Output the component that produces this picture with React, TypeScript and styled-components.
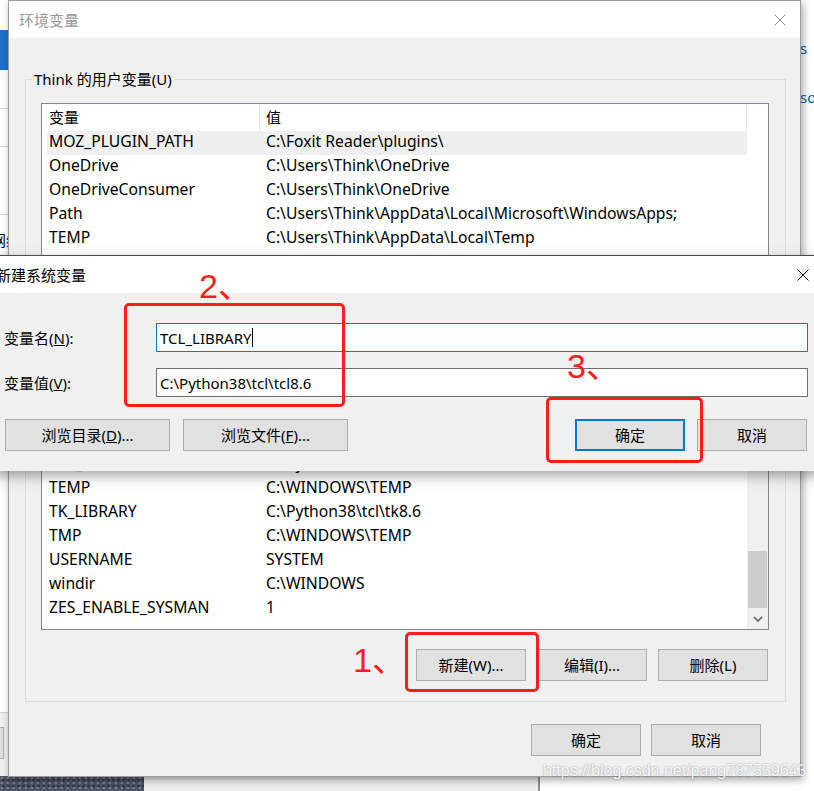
import styled, { createGlobalStyle } from "styled-components";

const GlobalStyle = createGlobalStyle`
  html, body { margin: 0; padding: 0; background: #fff; }
  body {
    font-family: "Noto Sans", "Noto Sans CJK SC", sans-serif;
    font-size: 15px;
    color: #000;
  }
  * { box-sizing: border-box; }
`;

const Desktop = styled.div`
  position: relative;
  width: 814px;
  height: 791px;
  overflow: hidden;
  background: #fff;
`;

/* ---- windows behind the dialogs ---- */

const SideWindow = styled.div`
  position: absolute;
  left: 0;
  top: 0;
  width: 40px;
  height: 776px;
  background: #fff;
  display: flex;
  flex-direction: column;
`;

const SideBand = styled.div<{ $h: number; $line?: boolean }>`
  flex: none;
  height: ${(p) => p.$h}px;
  border-bottom: ${(p) => (p.$line ? "1px solid #d4d4d4" : "none")};
`;

const AppTile = styled.div`
  flex: none;
  width: 36px;
  height: 40px;
  background: #1f6fc6;
  border-radius: 0 10px 10px 0;
`;

const SideText = styled.div`
  flex: none;
  margin: 15px 0 0 -9px;
  line-height: 20px;
  white-space: nowrap;
`;

const SideFill = styled.div`
  flex: 1;
  border-bottom: 1px solid #d4d4d4;
`;

const SideFoot = styled.div`
  flex: none;
  height: 63px;
  background: #f0f0f0;
  padding-top: 14px;
`;

const SideButton = styled.div`
  width: 40px;
  height: 32px;
  margin-left: -36px;
  background: #e1e1e1;
  border: 1px solid #adadad;
`;

const RightLinks = styled.div`
  position: absolute;
  left: 800px;
  top: 38px;
  display: flex;
  flex-direction: column;
  color: #0063b1;
  line-height: 20px;
  white-space: nowrap;
`;

const LinkLine = styled.span<{ $gap?: number }>`
  margin-top: ${(p) => p.$gap ?? 0}px;
`;

const Taskbar = styled.div`
  position: absolute;
  left: 0;
  top: 776px;
  width: 814px;
  height: 15px;
  display: flex;
`;

const Photo = styled.div`
  flex: none;
  width: 144px;
  background-color: #4c5365;
  background-image: radial-gradient(circle at 30% 40%, #7a8094 0.8px, transparent 1.6px),
    radial-gradient(circle at 70% 70%, #30343f 0.8px, transparent 1.8px);
  background-size: 6px 5px, 5px 6px;
`;

const GreyPane = styled.div`
  flex: none;
  width: 396px;
  background: linear-gradient(#dcdcdc, #efefef 40%);
  border-right: 2px solid #8e8e8e;
`;

/* ---- shared dialog parts ---- */

const TitleBar = styled.div<{ $active?: boolean; $inset: number }>`
  flex: none;
  height: 37px;
  background: #fff;
  display: flex;
  align-items: center;
  padding-left: ${(p) => p.$inset}px;
  color: ${(p) => (p.$active ? "#000" : "#999")};
  white-space: nowrap;
`;

const TitleText = styled.span`
  flex: 1;
  line-height: 20px;
`;

const CloseButton = styled.div<{ $width: number }>`
  flex: none;
  width: ${(p) => p.$width}px;
  height: 100%;
  display: flex;
  align-items: center;
  justify-content: center;
`;

const PushButton = styled.button<{ $width: number; $default?: boolean }>`
  flex: none;
  width: ${(p) => p.$width}px;
  height: 32px;
  padding: 0;
  background: #e1e1e1;
  border: ${(p) => (p.$default ? "2px solid #0078d7" : "1px solid #adadad")};
  font: inherit;
  color: #000;
  line-height: 20px;
  white-space: nowrap;
`;

const ButtonRow = styled.div<{ $top: number; $right: number; $gap: number }>`
  flex: none;
  display: flex;
  justify-content: flex-end;
  gap: ${(p) => p.$gap}px;
  margin-top: ${(p) => p.$top}px;
  padding-right: ${(p) => p.$right}px;
`;

/* ---- 环境变量 ---- */

const EnvWindow = styled.div`
  position: absolute;
  left: 8px;
  top: 0;
  width: 793px;
  height: 777px;
  border: 1px solid #9c9c9c;
  background: #f0f0f0;
  box-shadow: 2px 3px 8px rgba(0, 0, 0, 0.35);
  display: flex;
  flex-direction: column;
`;

const EnvBody = styled.div`
  flex: 1;
  padding: 32px 14px 0 16px;
  display: flex;
  flex-direction: column;
`;

const Group = styled.fieldset<{ $top: number; $bottom: number }>`
  margin: ${(p) => p.$top}px 0 0;
  padding: 0 0 ${(p) => p.$bottom}px;
  border: 1px solid #dcdcdc;
  min-width: 0;
  display: flex;
  flex-direction: column;
`;

const Legend = styled.legend`
  margin-left: 6px;
  padding: 0 2px;
  line-height: 18px;
  white-space: nowrap;
`;

const ListView = styled.div<{ $height: number }>`
  flex: none;
  height: ${(p) => p.$height}px;
  margin: 15px 16px 0 15px;
  border: 1px solid #828790;
  background: #fff;
  display: flex;
  overflow: hidden;
`;

const ListColumns = styled.div`
  flex: 1;
  min-width: 0;
  padding-left: 5px;
  display: flex;
  flex-direction: column;
  overflow: hidden;
`;

const HeaderRow = styled.div`
  flex: none;
  height: 27px;
  display: grid;
  grid-template-columns: 213px 1fr;
  border-right: 1px solid #e5e5e5;
`;

const HeaderCell = styled.div<{ $first?: boolean }>`
  line-height: 27px;
  padding-left: ${(p) => (p.$first ? 2 : 6)}px;
  border-right: ${(p) => (p.$first ? "1px solid #e5e5e5" : "none")};
`;

const ItemRow = styled.div<{ $selected?: boolean }>`
  flex: none;
  height: 24px;
  display: grid;
  grid-template-columns: 213px 1fr;
  background: ${(p) => (p.$selected ? "#efefef" : "transparent")};
`;

const ItemCell = styled.div<{ $first?: boolean }>`
  font-size: 15.7px;
  line-height: 21px;
  padding-left: ${(p) => (p.$first ? 2 : 6)}px;
  white-space: nowrap;
  overflow: hidden;
`;

const ScrollColumn = styled.div<{ $shown?: boolean }>`
  flex: none;
  width: 21px;
  background: ${(p) => (p.$shown ? "#f0f0f0" : "#fff")};
  display: flex;
  flex-direction: column;
`;

const ScrollSpacer = styled.div`
  flex: 1;
`;

const ScrollThumb = styled.div`
  flex: none;
  height: 57px;
  margin: 0 1px;
  background: #cdcdcd;
`;

const ScrollArrow = styled.div`
  flex: none;
  height: 21px;
  display: flex;
  align-items: center;
  justify-content: center;
`;

/* ---- 新建系统变量 ---- */

const NewVarWindow = styled.div`
  position: absolute;
  left: -14px;
  top: 255px;
  width: 840px;
  height: 216px;
  border-top: 1px solid #4a4a4a;
  background: #f0f0f0;
  box-shadow: 0 5px 12px rgba(0, 0, 0, 0.35);
  display: flex;
  flex-direction: column;
`;

const NewVarBody = styled.div`
  flex: 1;
  padding: 30px 18px 20px 18px;
  display: flex;
  flex-direction: column;
`;

const FieldRow = styled.div<{ $top?: number }>`
  flex: none;
  display: grid;
  grid-template-columns: 152px 1fr;
  align-items: center;
  margin-top: ${(p) => p.$top ?? 0}px;
`;

const FieldLabel = styled.label`
  line-height: 20px;
  white-space: nowrap;
`;

const TextBox = styled.div<{ $focused?: boolean }>`
  height: 29px;
  padding: 0 3px;
  border: 1px solid ${(p) => (p.$focused ? "#0078d7" : "#6e6e6e")};
  background: #fff;
  display: flex;
  align-items: center;
  line-height: 20px;
  white-space: nowrap;
`;

const Caret = styled.span`
  width: 1px;
  height: 19px;
  margin-left: 1px;
  background: #000;
`;

const DialogButtons = styled.div`
  flex: none;
  display: flex;
  margin-top: 22px;
  padding: 0 1px;
  gap: 13px;
`;

const Spacer = styled.div`
  flex: 1;
`;

const ConfirmPair = styled.div`
  display: flex;
  gap: 12px;
`;

/* ---- marks drawn over the screenshot ---- */

const RedFrame = styled.div<{ $x: number; $y: number; $w: number; $h: number }>`
  position: absolute;
  left: ${(p) => p.$x}px;
  top: ${(p) => p.$y}px;
  width: ${(p) => p.$w}px;
  height: ${(p) => p.$h}px;
  border: 3px solid #ff1c1c;
  border-radius: 5px;
  pointer-events: none;
`;

const StepMark = styled.div<{ $x: number; $y: number }>`
  position: absolute;
  left: ${(p) => p.$x}px;
  top: ${(p) => p.$y}px;
  font-family: "Liberation Sans", "Noto Sans CJK SC", sans-serif;
  font-size: 34px;
  line-height: 34px;
  color: #ff1c1c;
  white-space: nowrap;
`;

const Watermark = styled.div`
  position: absolute;
  left: 543px;
  top: 762px;
  font-family: "Liberation Sans", sans-serif;
  font-size: 16px;
  line-height: 18px;
  color: rgba(255, 255, 255, 0.9);
  text-shadow: 0 0 2px rgba(0, 0, 0, 0.4);
  white-space: nowrap;
`;

function CloseIcon({ color }: { color: string }) {
  return (
    <svg width="12" height="12" viewBox="0 0 12 12">
      <path d="M0.5 0.5 L11.5 11.5 M11.5 0.5 L0.5 11.5" stroke={color} strokeWidth="1" fill="none" />
    </svg>
  );
}

function ChevronDown() {
  return (
    <svg width="10" height="6" viewBox="0 0 10 6">
      <polyline points="1,1 5,5 9,1" stroke="#606060" strokeWidth="1.6" fill="none" />
    </svg>
  );
}

type Row = [string, string];

const userRows: Row[] = [
  ["MOZ_PLUGIN_PATH", "C:\\Foxit Reader\\plugins\\"],
  ["OneDrive", "C:\\Users\\Think\\OneDrive"],
  ["OneDriveConsumer", "C:\\Users\\Think\\OneDrive"],
  ["Path", "C:\\Users\\Think\\AppData\\Local\\Microsoft\\WindowsApps;"],
  ["TEMP", "C:\\Users\\Think\\AppData\\Local\\Temp"],
  ["TMP", "C:\\Users\\Think\\AppData\\Local\\Temp"],
];

const systemRows: Row[] = [
  ["PROCESSOR_REVISION", "9e0a"],
  ["PSModulePath", "%ProgramFiles%\\WindowsPowerShell\\Modules;"],
  ["TCL_LIBRARY", "C:\\Python38\\tcl\\tcl8.6"],
  ["TEMP", "C:\\WINDOWS\\TEMP"],
  ["TK_LIBRARY", "C:\\Python38\\tcl\\tk8.6"],
  ["TMP", "C:\\WINDOWS\\TEMP"],
  ["USERNAME", "SYSTEM"],
  ["windir", "C:\\WINDOWS"],
  ["ZES_ENABLE_SYSMAN", "1"],
];

function VarList({ rows, height, scroll, selected }: { rows: Row[]; height: number; scroll?: boolean; selected?: number }) {
  return (
    <ListView $height={height}>
      <ListColumns>
        <HeaderRow>
          <HeaderCell $first>变量</HeaderCell>
          <HeaderCell>值</HeaderCell>
        </HeaderRow>
        {rows.map(([name, value], i) => (
          <ItemRow key={name + i} $selected={i === selected}>
            <ItemCell $first>{name}</ItemCell>
            <ItemCell>{value}</ItemCell>
          </ItemRow>
        ))}
      </ListColumns>
      <ScrollColumn $shown={scroll}>
        {scroll && (
          <>
            <ScrollSpacer />
            <ScrollThumb />
            <ScrollArrow>
              <ChevronDown />
            </ScrollArrow>
          </>
        )}
      </ScrollColumn>
    </ListView>
  );
}

export default function App() {
  return (
    <Desktop>
      <GlobalStyle />

      <SideWindow>
        <SideBand $h={30} />
        <AppTile />
        <SideBand $h={39} $line />
        <SideBand $h={38} $line />
        <SideBand $h={68} $line />
        <SideText>网络</SideText>
        <SideFill />
        <SideFoot>
          <SideButton />
        </SideFoot>
      </SideWindow>

      <RightLinks>
        <LinkLine>s</LinkLine>
        <LinkLine $gap={29}>soft</LinkLine>
      </RightLinks>

      <Taskbar>
        <Photo />
        <GreyPane />
      </Taskbar>

      <EnvWindow>
        <TitleBar $inset={10}>
          <TitleText>环境变量</TitleText>
          <CloseButton $width={40}>
            <CloseIcon color="#8a8a8a" />
          </CloseButton>
        </TitleBar>
        <EnvBody>
          <Group $top={0} $bottom={10}>
            <Legend>Think 的用户变量(U)</Legend>
            <VarList rows={userRows} height={180} selected={0} />
            <ButtonRow $top={10} $right={17} $gap={11}>
              <PushButton $width={110}>新建(N)...</PushButton>
              <PushButton $width={110}>编辑(E)...</PushButton>
              <PushButton $width={110}>删除(D)</PushButton>
            </ButtonRow>
          </Group>
          <Group $top={8} $bottom={20}>
            <Legend>系统变量(S)</Legend>
            <VarList rows={systemRows} height={253} scroll />
            <ButtonRow $top={19} $right={17} $gap={11}>
              <PushButton $width={110}>新建(W)...</PushButton>
              <PushButton $width={110}>编辑(I)...</PushButton>
              <PushButton $width={110}>删除(L)</PushButton>
            </ButtonRow>
          </Group>
          <ButtonRow $top={22} $right={25} $gap={10}>
            <PushButton $width={110}>确定</PushButton>
            <PushButton $width={110}>取消</PushButton>
          </ButtonRow>
        </EnvBody>
      </EnvWindow>

      <NewVarWindow>
        <TitleBar $inset={10} $active>
          <TitleText>新建系统变量</TitleText>
          <CloseButton $width={46}>
            <CloseIcon color="#000" />
          </CloseButton>
        </TitleBar>
        <NewVarBody>
          <FieldRow>
            <FieldLabel>
              变量名(<u>N</u>):
            </FieldLabel>
            <TextBox $focused>
              TCL_LIBRARY
              <Caret />
            </TextBox>
          </FieldRow>
          <FieldRow $top={16}>
            <FieldLabel>
              变量值(<u>V</u>):
            </FieldLabel>
            <TextBox>C:\Python38\tcl\tcl8.6</TextBox>
          </FieldRow>
          <DialogButtons>
            <PushButton $width={165}>
              浏览目录(<u>D</u>)...
            </PushButton>
            <PushButton $width={165}>
              浏览文件(<u>F</u>)...
            </PushButton>
            <Spacer />
            <ConfirmPair>
              <PushButton $width={110} $default>
                确定
              </PushButton>
              <PushButton $width={110}>取消</PushButton>
            </ConfirmPair>
          </DialogButtons>
        </NewVarBody>
      </NewVarWindow>

      <RedFrame $x={405} $y={632} $w={134} $h={60} />
      <RedFrame $x={124} $y={303} $w={221} $h={104} />
      <RedFrame $x={546} $y={397} $w={157} $h={66} />
      <StepMark $x={353} $y={643}>1、</StepMark>
      <StepMark $x={199} $y={269}>2、</StepMark>
      <StepMark $x={567} $y={349}>3、</StepMark>

      <Watermark>https://blog.csdn.net/pang787559643</Watermark>
    </Desktop>
  );
}
